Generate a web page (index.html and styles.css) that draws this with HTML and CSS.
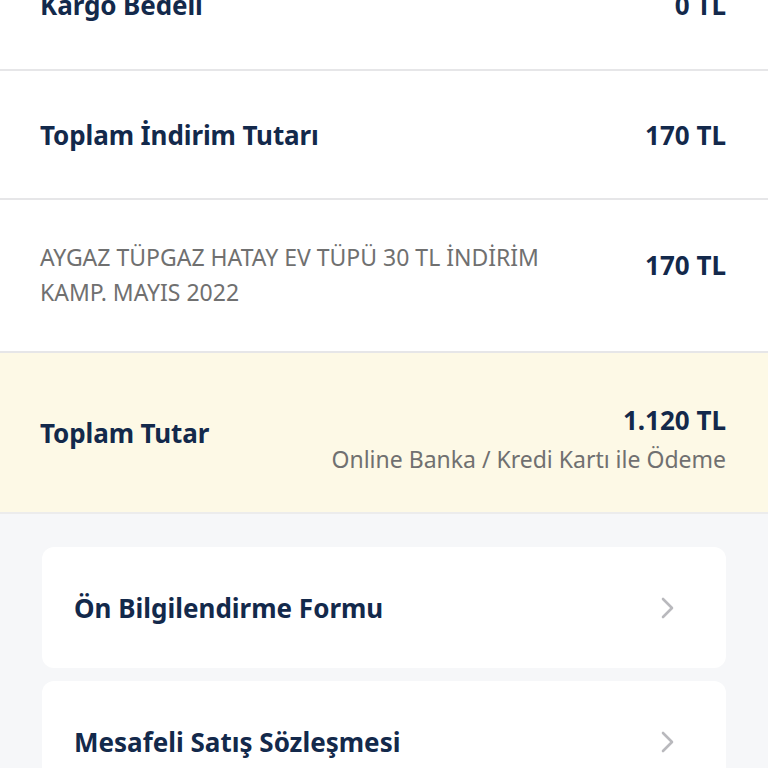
FILE: index.html
```html
<!DOCTYPE html>
<html lang="tr">
<head>
<meta charset="utf-8">
<link rel="stylesheet" href="styles.css">
</head>
<body>
<div class="page">
  <div class="row row-cargo">
    <span class="label">Kargo Bedeli</span>
    <span class="value">0 TL</span>
  </div>
  <div class="row row-discount">
    <span class="label">Toplam İndirim Tutarı</span>
    <span class="value">170 TL</span>
  </div>
  <div class="row row-campaign">
    <span class="desc">AYGAZ TÜPGAZ HATAY EV TÜPÜ 30 TL İNDİRİM KAMP. MAYIS 2022</span>
    <span class="value">170 TL</span>
  </div>
  <div class="row row-total">
    <span class="label">Toplam Tutar</span>
    <div class="total-right">
      <span class="value">1.120 TL</span>
      <span class="sub">Online Banka / Kredi Kartı ile Ödeme</span>
    </div>
  </div>
  <div class="links">
    <div class="card">
      <span class="card-title">Ön Bilgilendirme Formu</span>
      <svg class="chev" width="20" height="24" viewBox="0 0 20 24"><path d="M5 3 L14 12 L5 21" fill="none" stroke="#b9b9bd" stroke-width="2.6" stroke-linecap="round" stroke-linejoin="round"/></svg>
    </div>
    <div class="card">
      <span class="card-title">Mesafeli Satış Sözleşmesi</span>
      <svg class="chev" width="20" height="24" viewBox="0 0 20 24"><path d="M5 3 L14 12 L5 21" fill="none" stroke="#b9b9bd" stroke-width="2.6" stroke-linecap="round" stroke-linejoin="round"/></svg>
    </div>
  </div>
</div>
</body>
</html>
```
FILE: styles.css
```css
html, body {
  margin: 0;
  padding: 0;
}
body {
  font-family: "Noto Sans", "Open Sans", sans-serif;
  color: #13294b;
  background: #f6f7f9;
  width: 768px;
  height: 768px;
  overflow: hidden;
}
.page {
  margin-top: -59px;
}
.row {
  display: flex;
  justify-content: space-between;
  align-items: center;
  padding: 0 42px 0 40px;
  background: #fff;
  border-bottom: 2px solid #e6e6e8;
}
.row-cargo { height: 128px; }
.row-discount { height: 127px; }
.row-campaign { height: 153px; align-items: flex-start; padding-top: 40px; box-sizing: border-box; }
.row-total { height: 159px; background: #fdf9e6; border-bottom: 2px solid #ececec; }
.label {
  font-size: 26px;
  font-weight: 700;
  letter-spacing: -0.1px;
}
.value {
  font-size: 26px;
  font-weight: 700;
}
.row-campaign .value { margin-top: 7px; }
.desc {
  width: 540px;
  font-size: 23px;
  line-height: 35px;
  color: #707070;
  font-weight: 400;
}
.total-right {
  display: flex;
  flex-direction: column;
  align-items: flex-end;
  margin-top: 12px;
}
.sub {
  font-size: 23px;
  color: #707070;
  margin-top: 5px;
}
.links {
  padding: 33px 42px 0 42px;
  display: flex;
  flex-direction: column;
  gap: 13px;
}
.card {
  background: #fff;
  border-radius: 12px;
  height: 121px;
  display: flex;
  align-items: center;
  justify-content: space-between;
  padding: 0 48px 0 32px;
}
.card-title {
  font-size: 26px;
  font-weight: 700;
}
.chev { display: block; }
```
